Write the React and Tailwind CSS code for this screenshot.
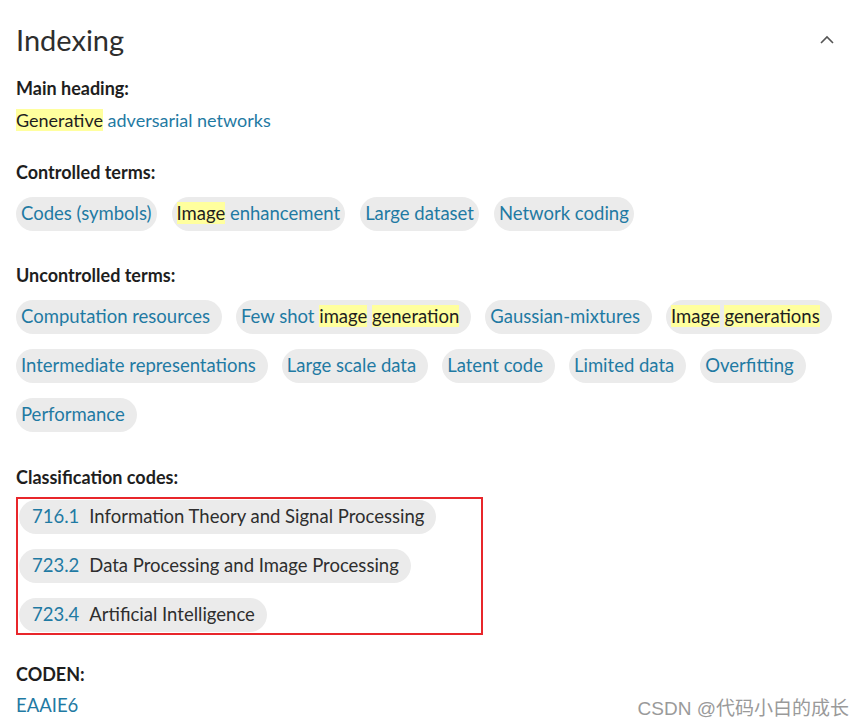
import React from "react";

const Hl = ({ children }) => <span className="bg-[#ffff9e] text-[#1e1e1e]">{children}</span>;

const Chip = ({ children, className = "pr-[5px]" }) => (
  <span className={`inline-flex h-[34px] items-center rounded-full bg-[#ebebeb] pl-[5px] text-[18.5px] text-[#1f7aa3] ${className}`}>
    <span>{children}</span>
  </span>
);

const Label = ({ children, className = "" }) => (
  <h3 className={`text-[18px] font-bold leading-none text-[#1e1e1e] ${className}`}>{children}</h3>
);

const controlled = [
  ["Codes (symbols)"],
  [<Hl key="a">Image</Hl>, " enhancement"],
  ["Large dataset"],
  ["Network coding"],
];

const uncontrolled = [
  ["Computation resources"],
  ["Few shot ", <Hl key="a">image</Hl>, " ", <Hl key="b">generation</Hl>],
  ["Gaussian-mixtures"],
  [<Hl key="a">Image</Hl>, " ", <Hl key="b">generations</Hl>],
  ["Intermediate representations"],
  ["Large scale data"],
  ["Latent code"],
  ["Limited data"],
  ["Overfitting"],
  ["Performance"],
];

const codes = [
  ["716.1", "Information Theory and Signal Processing"],
  ["723.2", "Data Processing and Image Processing"],
  ["723.4", "Artificial Intelligence"],
];

export default function App() {
  return (
    <div className="relative h-[726px] w-[865px] bg-white font-['Lato',sans-serif]">
      <div className="px-4 pt-[25px]">
        <div className="flex items-center justify-between">
          <h2 className="text-[29px] font-normal leading-none text-[#2e2e2e]">Indexing</h2>
          <svg width="16" height="10" viewBox="0 0 16 10" className="mr-[14px]">
            <path d="M2 8 L8 2 L14 8" fill="none" stroke="#555" strokeWidth="1.6" />
          </svg>
        </div>

        <Label className="mt-[25px]">Main heading:</Label>
        <div className="mt-[11px] text-[18px] leading-[24px] text-[#1f7aa3]">
          <Hl>Generative</Hl> adversarial networks
        </div>

        <Label className="mt-[31px]">Controlled terms:</Label>
        <div className="mt-[16px] flex flex-wrap gap-[15px]">
          {controlled.map((c, i) => (
            <Chip key={i}>{c}</Chip>
          ))}
        </div>

        <Label className="mt-[35px]">Uncontrolled terms:</Label>
        <div className="mt-[16px] flex flex-wrap gap-x-[14px] gap-y-[15px]">
          {uncontrolled.map((c, i) => (
            <Chip key={i} className="pr-[12px]">{c}</Chip>
          ))}
        </div>

        <Label className="mt-[36px]">Classification codes:</Label>
        <div className="mt-[11px] flex w-[467px] flex-col items-start gap-[15px] border-2 border-[#e8262b] px-[1px] py-[1px]">
          {codes.map(([n, t]) => (
            <span key={n} className="inline-flex h-[34px] items-center gap-[10px] rounded-full bg-[#ebebeb] pl-[13px] pr-[12px] text-[18.5px]">
              <span className="text-[#1f7aa3]">{n}</span>
              <span className="text-[#2e2e2e]">{t}</span>
            </span>
          ))}
        </div>

        <Label className="mt-[30px]">CODEN:</Label>
        <div className="mt-[10px] text-[18.5px] leading-[24px] text-[#1f7aa3]">EAAIE6</div>
      </div>

      <div className="absolute bottom-[8px] right-[16px] font-['Liberation_Sans','Noto_Sans_CJK_SC',sans-serif] text-[19px] leading-none text-[#9a9a9a]">
        CSDN @代码小白的成长
      </div>
    </div>
  );
}
